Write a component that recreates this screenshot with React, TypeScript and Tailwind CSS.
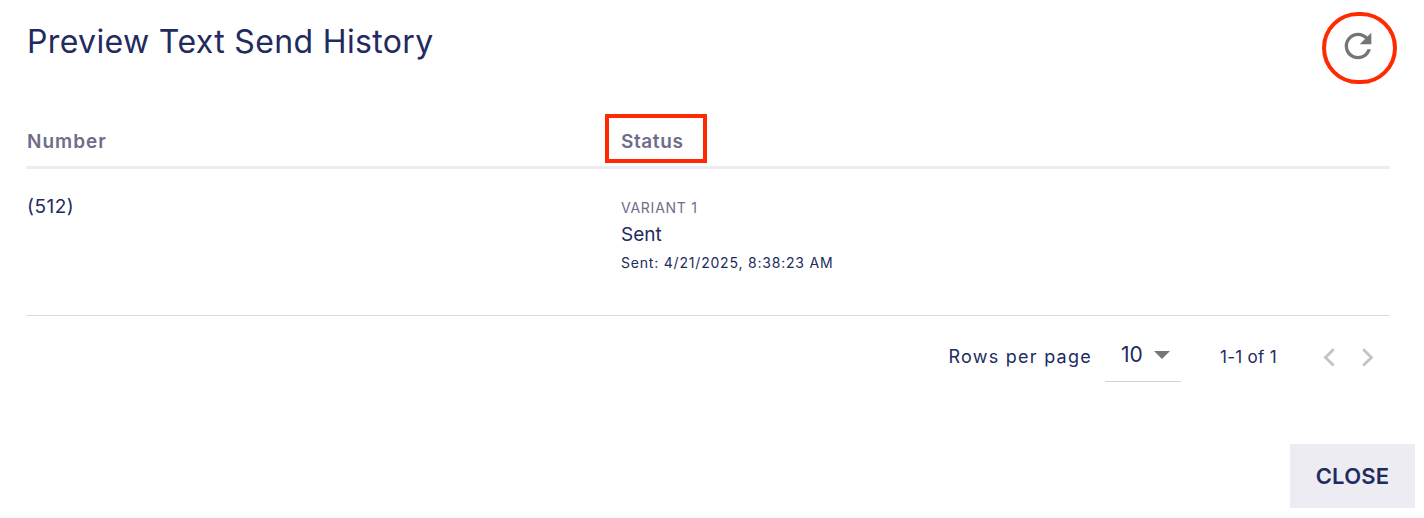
import React from "react";

export default function App() {
  return (
    <div className="relative w-[1415px] h-[518px] bg-white text-[#222b60] font-['Inter','Noto_Sans',sans-serif] flex flex-col">
      <div className="flex items-start justify-between pl-[27px] pr-[25px] h-[114px]">
        <h1 className="mt-[21px] text-[32px] leading-[42px] font-normal tracking-[0.36px]">Preview Text Send History</h1>
        <button className="relative mt-[12px] mr-[-7px] w-[74px] h-[70px] pr-[4px] pb-[2px] flex items-center justify-center text-[#757575]">
          <svg width="40" height="40" viewBox="0 0 24 24" fill="currentColor">
            <path d="M17.65 6.35A7.958 7.958 0 0 0 12 4c-4.42 0-7.99 3.58-7.99 8s3.57 8 7.99 8c3.73 0 6.84-2.55 7.73-6h-2.08A5.99 5.99 0 0 1 12 18c-3.31 0-6-2.69-6-6s2.69-6 6-6c1.66 0 3.14.69 4.22 1.78L13 11h7V4l-2.35 2.35z" />
          </svg>
          <span className="absolute left-[-1px] top-0 w-[75px] h-[72px] rounded-full border-[4px] border-[#ff2a00]" />
        </button>
      </div>

      <div className="ml-[26px] mr-[25px] grid grid-cols-[595px_1fr] h-[55px] border-b-[3px] border-[#edecf3] text-[#6f6c8b] font-semibold text-[19px]">
        <div className="pl-[1px] pt-[15px] leading-[25px] tracking-[1px]">Number</div>
        <div className="relative pt-[15px] leading-[25px] tracking-[0.6px]">
          Status
          <span className="absolute left-[-16px] top-0 w-[102px] h-[49px] border-[4px] border-[#ff2a00]" />
        </div>
      </div>

      <div className="ml-[26px] mr-[25px] grid grid-cols-[595px_1fr] h-[147px] border-b border-[#dcdbe0]">
        <div className="pl-[1px] pt-[26px] text-[19px] leading-[24px] tracking-[0.5px]">(512)</div>
        <div className="pt-[29px]">
          <div className="text-[14px] leading-[20px] text-[#6f6c8b] tracking-[0.75px]">VARIANT 1</div>
          <div className="mt-[4px] text-[19px] leading-[25px]">Sent</div>
          <div className="mt-[6px] text-[14px] leading-[20px] tracking-[0.8px]">Sent: 4/21/2025, 8:38:23 AM</div>
        </div>
      </div>

      <div className="mr-[25px] flex items-start justify-end h-[128px] text-[18px]">
        <span className="mt-[29px] leading-[24px] tracking-[1.25px]">Rows per page</span>
        <div className="ml-[13px] mt-[22px] w-[76px] h-[44px] border-b border-[#d3d2d8] flex items-center pl-[16px] pb-[9px] text-[21px]">
          <span>10</span>
          <svg className="ml-[10px]" width="18" height="10" viewBox="0 0 18 10" fill="#757575"><path d="M1 1h16l-8 8z" /></svg>
        </div>
        <span className="ml-[39px] mt-[29px] leading-[24px] text-[17px] tracking-[0.3px]">1-1 of 1</span>
        <div className="ml-[42px] mt-[29px] flex items-center gap-[16px] pr-[11px] h-[26px] text-[#c3c3c3]">
          <svg width="22" height="24" viewBox="0 0 22 24" fill="currentColor"><path d="M16.5 4.4 14.4 2.3 4.7 12l9.7 9.7 2.1-2.1L8.9 12z" transform="scale(0.95)" /></svg>
          <svg width="22" height="24" viewBox="0 0 22 24" fill="currentColor"><path d="M5.5 4.4 7.6 2.3 17.3 12l-9.7 9.7-2.1-2.1L13.1 12z" transform="scale(0.95)" /></svg>
        </div>
      </div>

      <div className="flex justify-end">
        <button className="w-[125px] h-[64px] bg-[#edecf3] font-semibold text-[22px] tracking-[0.2px]">CLOSE</button>
      </div>
    </div>
  );
}
